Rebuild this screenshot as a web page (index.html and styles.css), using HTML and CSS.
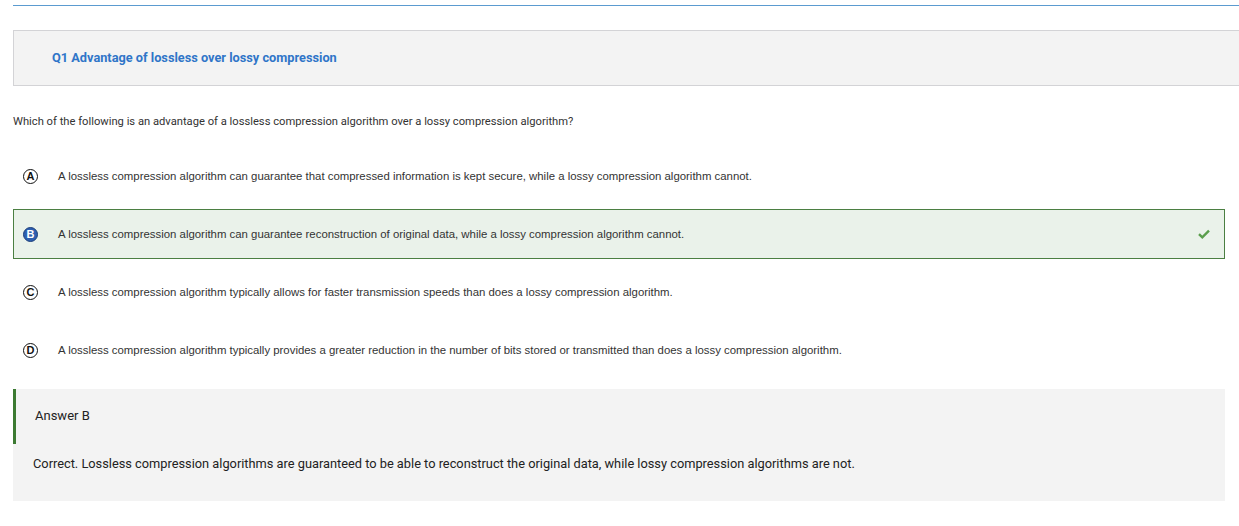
FILE: index.html
```html
<!DOCTYPE html>
<html>
<head>
<meta charset="utf-8">
<link rel="stylesheet" href="styles.css">
</head>
<body>
<div class="page">
  <div class="rule"></div>
  <div class="qheader"><span class="qtitle">Q1 Advantage of lossless over lossy compression</span></div>
  <p class="question">Which of the following is an advantage of a lossless compression algorithm over a lossy compression algorithm?</p>
  <div class="options">
    <div class="option"><span class="badge">A</span><span class="otext">A lossless compression algorithm can guarantee that compressed information is kept secure, while a lossy compression algorithm cannot.</span></div>
    <div class="option correct"><span class="badge filled">B</span><span class="otext">A lossless compression algorithm can guarantee reconstruction of original data, while a lossy compression algorithm cannot.</span>
      <svg class="check" width="12" height="10" viewBox="0 0 12 10"><path d="M1 5.2 L4.3 8.3 L11 1.6" fill="none" stroke="#5a9e4c" stroke-width="2.4"/></svg>
    </div>
    <div class="option"><span class="badge">C</span><span class="otext">A lossless compression algorithm typically allows for faster transmission speeds than does a lossy compression algorithm.</span></div>
    <div class="option"><span class="badge">D</span><span class="otext">A lossless compression algorithm typically provides a greater reduction in the number of bits stored or transmitted than does a lossy compression algorithm.</span></div>
  </div>
  <div class="answer">
    <div class="ahead">Answer B</div>
    <div class="abody">Correct. Lossless compression algorithms are guaranteed to be able to reconstruct the original data, while lossy compression algorithms are not.</div>
  </div>
</div>
</body>
</html>
```
FILE: styles.css
```css
html, body { margin: 0; padding: 0; background: #fff; }
.page { padding: 5px 0 0 13px; font-family: Roboto, "Liberation Sans", sans-serif; color: #222; }
.rule { height: 1px; background: #5b9bd0; }
.qheader {
  margin-top: 24px;
  height: 54px;
  box-sizing: content-box;
  background: #f3f3f3;
  border: 1px solid #d3d3d6;
  border-right: none;
  display: flex;
  align-items: center;
  padding-left: 38px;
}
.qtitle { color: #2f75c8; font-weight: 700; font-size: 12.75px; margin-bottom: 2px; }
.question { margin: 0; padding-top: 29px; height: 14px; line-height: 14px; font-size: 11.2px; color: #333; }
.options { margin: 22px 14px 0 0; display: flex; flex-direction: column; gap: 8px; }
.option {
  height: 50px;
  box-sizing: border-box;
  display: flex;
  align-items: center;
  padding: 0 10px 0 9px;
  border: 1px solid transparent;
  font-family: "Liberation Sans", Arial, sans-serif;
  font-size: 11.4px;
  color: #333;
}
.option.correct { background: #eaf2ea; border-color: #4b7f42; }
.badge {
  width: 13px; height: 13px;
  border: 1.5px solid #111;
  border-radius: 50%;
  display: flex; align-items: center; justify-content: center;
  font-family: "Liberation Sans", Arial, sans-serif;
  font-weight: 700; font-size: 11px; color: #111;
  flex: none;
}
.badge.filled { background: #2d5fb0; border-color: #1c3e7a; color: #fff; }
.otext { margin-left: 20px; flex: 1; }
.check { flex: none; margin-right: 4px; }
.answer { margin: 14px 14px 0 0; background: #f3f3f3; height: 112px; }
.ahead {
  height: 55px; box-sizing: border-box;
  border-left: 3px solid #3c7a32;
  padding-left: 19px; padding-bottom: 2px;
  display: flex; align-items: center;
  font-size: 13px; color: #222;
}
.abody { padding: 12px 0 0 20px; font-size: 12.8px; line-height: 16px; color: #222; }
```
